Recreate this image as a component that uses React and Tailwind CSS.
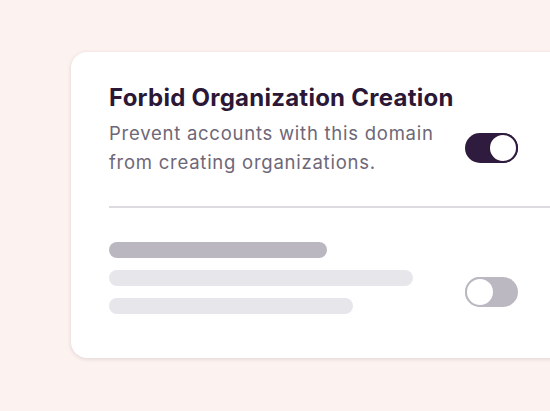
export default function App() {
  return (
    <div
      className="h-[411px] w-[550px] overflow-hidden bg-[#fcf2ef] pt-[52px] pl-[71px]"
      style={{ fontFamily: "Inter, 'Noto Sans', sans-serif" }}
    >
      <div className="w-[500px] rounded-2xl bg-white pl-[38px] pr-[53px] pt-[32px] pb-[44px] shadow-[0_1px_4px_rgba(60,30,30,0.14)]">
        {/* setting row */}
        <h2 className="text-[24px] leading-[28px] font-bold tracking-[0.25px] text-[#2b1736]">
          Forbid Organization Creation
        </h2>
        <div className="mt-[7px] flex items-center justify-between">
          <p className="text-[18.5px] leading-[29px] tracking-[0.75px] text-[#6e6777]">
            Prevent accounts with this domain
            <br />
            from creating organizations.
          </p>
          <button className="flex h-[30px] w-[53px] shrink-0 items-center justify-end rounded-full bg-[#2f1b3d]">
            <span className="h-[30px] w-[30px] rounded-full border-2 border-[#2f1b3d] bg-white" />
          </button>
        </div>

        <div className="mt-[29px] -mr-[53px] h-[2px] bg-[#dddbe0]" />

        {/* placeholder row */}
        <div className="mt-[34px] h-4 w-[218px] rounded-full bg-[#bbb7c0]" />
        <div className="mt-3 flex items-center justify-between">
          <div className="flex flex-col gap-3">
            <div className="h-4 w-[304px] rounded-full bg-[#e7e6ea]" />
            <div className="h-4 w-[244px] rounded-full bg-[#e7e6ea]" />
          </div>
          <button className="flex h-[30px] w-[53px] shrink-0 items-center justify-start rounded-full bg-[#bcb8c1]">
            <span className="h-[30px] w-[30px] rounded-full border-2 border-[#bcb8c1] bg-white" />
          </button>
        </div>
      </div>
    </div>
  );
}
